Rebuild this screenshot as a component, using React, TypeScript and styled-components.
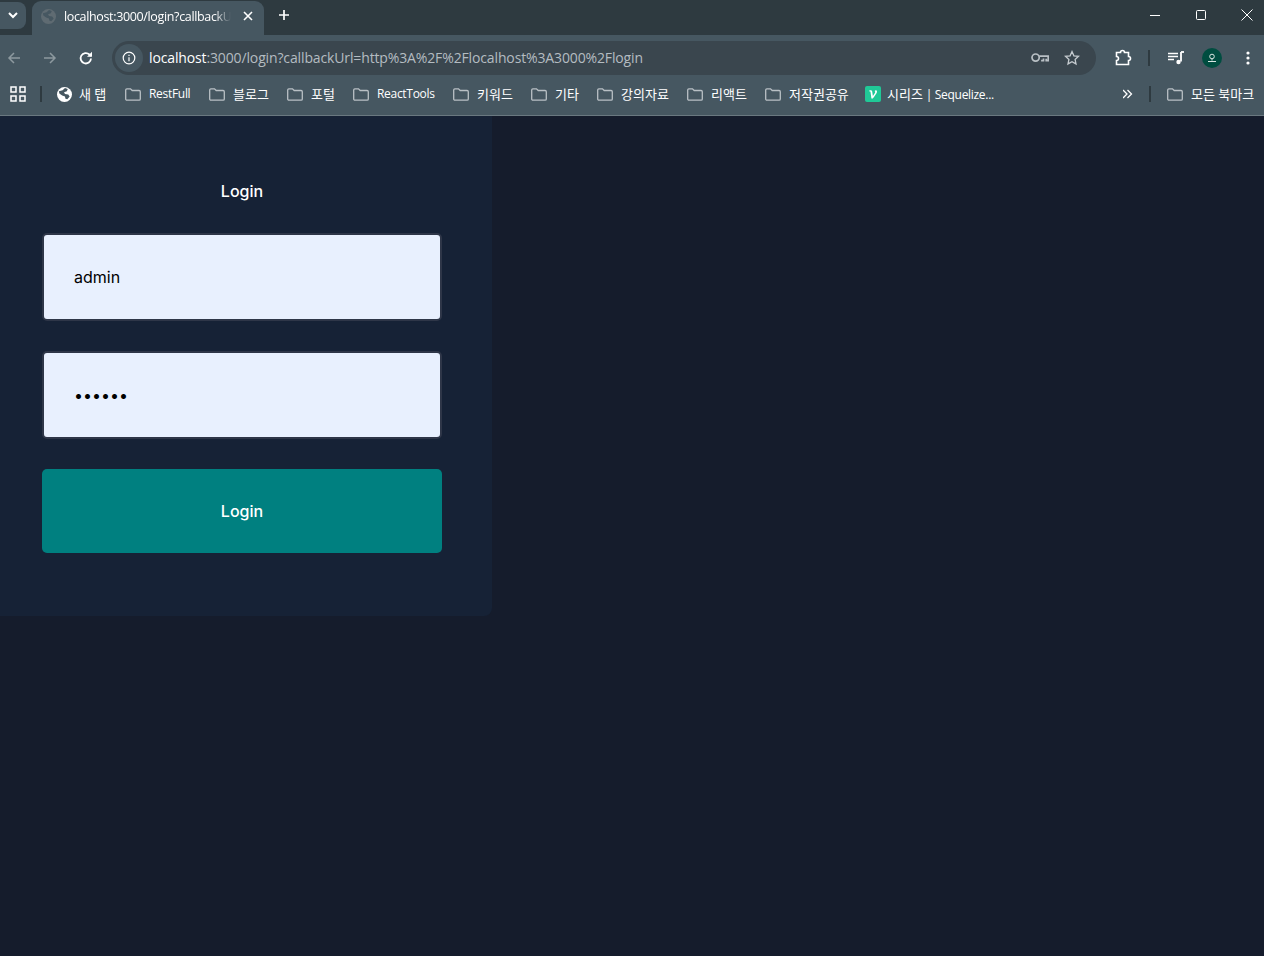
import styled, { createGlobalStyle } from 'styled-components'

const UI_FONT = `"Open Sans", "Noto Sans", "Noto Sans CJK KR", sans-serif`

// step = distance from this bookmark's icon to the next one
const bookmarks = [
  { label: 'RestFull', step: 84 },
  { label: '블로그', step: 78, ko: true },
  { label: '포털', step: 66, ko: true },
  { label: 'ReactTools', step: 100 },
  { label: '키워드', step: 78, ko: true },
  { label: '기타', step: 66, ko: true },
  { label: '강의자료', step: 90, ko: true },
  { label: '리액트', step: 78, ko: true },
  { label: '저작권공유', step: 100, ko: true },
]

const GlobalStyle = createGlobalStyle`
  html, body {
    margin: 0;
    padding: 0;
    height: 100%;
    background: #151c2c;
  }
  #root {
    height: 100%;
  }
  * {
    box-sizing: border-box;
  }
  svg {
    display: block;
    flex: none;
  }
`

const Root = styled.div`
  width: 1264px;
  height: 956px;
  display: flex;
  flex-direction: column;
  overflow: hidden;
  background: #151c2c;
`

const Chrome = styled.header`
  flex: none;
  font-family: ${UI_FONT};
  color: #fff;
`

const TabStrip = styled.div`
  height: 35px;
  display: flex;
  align-items: flex-end;
  background: #2e3a40;
  position: relative;
`

const TabSearch = styled.button`
  position: absolute;
  left: 0;
  top: 2px;
  width: 26px;
  height: 27px;
  padding: 0;
  border: 0;
  border-radius: 0 8px 8px 0;
  background: #465761;
  display: flex;
  align-items: center;
  justify-content: center;
`

const Tab = styled.div`
  width: 232px;
  height: 34px;
  margin-left: 32px;
  padding: 0 10px 3px 9px;
  display: flex;
  align-items: center;
  border-radius: 9px 9px 0 0;
  background: #465761;
`

const TabTitle = styled.span`
  width: 167px;
  margin-left: 8px;
  overflow: hidden;
  white-space: nowrap;
  font-size: 12.5px;
  letter-spacing: -0.35px;
  mask-image: linear-gradient(to right, #000 90%, transparent);
`

const TabClose = styled.span`
  margin: 0 1px 2px auto;
  display: flex;
`

const NewTab = styled.span`
  margin: 0 0 5px 14px;
  height: 30px;
  display: flex;
  align-items: center;
`

const WindowControls = styled.div`
  position: absolute;
  right: 10px;
  top: 8px;
  display: flex;
  gap: 32px;
`

const Toolbar = styled.div`
  height: 41px;
  padding: 5px 10px 0 6px;
  display: flex;
  align-items: center;
  background: #465761;
`

const NavIcons = styled.div`
  display: flex;
  align-items: center;
  gap: 20px;
  width: 106px;
`

const NavButton = styled.span<{ $disabled?: boolean }>`
  color: ${(p) => (p.$disabled ? '#8d999f' : '#fff')};
`

const Omnibox = styled.div`
  width: 984px;
  height: 34px;
  padding: 0 16px 0 3px;
  display: flex;
  align-items: center;
  border-radius: 17px;
  background: #3a464e;
`

const SiteInfo = styled.span`
  width: 28px;
  height: 28px;
  display: flex;
  align-items: center;
  justify-content: center;
  border-radius: 50%;
  background: #465761;
`

const Url = styled.span`
  margin: 0 0 2px 6px;
  flex: 1;
  font-size: 14px;
  letter-spacing: -0.135px;
  white-space: nowrap;
  color: #b4bcc1;

  b {
    font-weight: 400;
    color: #fff;
  }
`

const OmniActions = styled.div`
  display: flex;
  align-items: center;
  gap: 15px;
`

const ToolActions = styled.div`
  margin-left: 18px;
  display: flex;
  align-items: center;
`

const Slot = styled.span<{ $left?: number; $right?: number }>`
  display: block;
  margin-left: ${(p) => p.$left ?? 0}px;
  margin-right: ${(p) => p.$right ?? 0}px;
`

const Divider = styled.span`
  display: block;
  width: 2px;
  height: 16px;
  background: #2e3a40;
`

const Avatar = styled.span`
  width: 20px;
  height: 20px;
  display: flex;
  align-items: center;
  justify-content: center;
  border-radius: 50%;
  background: #004d40;
`

const BookmarkBar = styled.div`
  height: 40px;
  padding: 0 9px 3px 10px;
  display: flex;
  align-items: center;
  background: #465761;
  border-bottom: 1px solid #6a7880;
`

const AppsButton = styled.span`
  display: flex;
  margin-right: 14px;
`

const Bookmark = styled.span<{ $width: number; $gap?: number }>`
  width: ${(p) => p.$width}px;
  flex: none;
  display: flex;
  align-items: center;
  gap: ${(p) => p.$gap ?? 8}px;
  white-space: nowrap;
  color: #fff;
`

const Label = styled.span<{ $ko?: boolean }>`
  display: inline-block;
  font-size: ${(p) => (p.$ko ? 13 : 12)}px;
  letter-spacing: ${(p) => (p.$ko ? 0 : -0.3)}px;
  white-space: pre;
  transform: translateY(-1px);
`

const BookmarkList = styled.div`
  margin-left: 15px;
  display: flex;
  align-items: center;
`

const Overflow = styled.div`
  margin-left: auto;
  display: flex;
  align-items: center;
  gap: 16px;
`

const Main = styled.main`
  flex: 1;
  min-height: 0;
`

const LoginCard = styled.form`
  width: 492px;
  height: 500px;
  padding: 63px 50px 0 42px;
  display: flex;
  flex-direction: column;
  border-radius: 0 0 8px 0;
  background: #162236;
  font-family: Inter, "Liberation Sans", sans-serif;
`

const Title = styled.h1`
  margin: 0 0 30px;
  font-size: 16px;
  font-weight: 500;
  line-height: 24px;
  text-align: center;
  color: #fff;
`

const Field = styled.input`
  width: 400px;
  height: 87.5px;
  margin-bottom: 30.5px;
  padding: 0 30px;
  border: 2px solid #2e3648;
  border-radius: 5px;
  outline: 0;
  font-family: inherit;
  font-size: 16px;
  color: #000;
  background: #e8f0fe;
`

const Submit = styled.button`
  width: 400px;
  height: 84px;
  padding: 0;
  border: 0;
  border-radius: 5px;
  font-family: inherit;
  font-size: 16px;
  font-weight: 500;
  color: #fff;
  background: #008080;
`

const Folder = () => (
  <svg width="16" height="13" viewBox="0 0 16 13" fill="none" stroke="#b9c0c5" strokeWidth="1.3">
    <path d="M.7 2A1.2 1.2 0 0 1 1.9.8h3.6l1.7 1.7h6.9a1.2 1.2 0 0 1 1.2 1.2v7.3a1.2 1.2 0 0 1-1.2 1.2H1.9a1.2 1.2 0 0 1-1.2-1.2z" />
  </svg>
)

const Globe = ({ color = '#fff' }: { color?: string }) => (
  <svg width="15" height="15" viewBox="0 0 16 16">
    <circle cx="8" cy="8" r="8" fill={color} />
    <path
      d="M2 4.5 6 3.5 8.5 1l3 1-1 2.5-3 1 1 2 3.5.5 1.5 2-2.5 3-2-.5-.5-2.5L5.5 9 2.5 7z"
      fill="#465761"
    />
  </svg>
)

export default function App() {
  return (
    <Root>
      <GlobalStyle />
      <Chrome>
        <TabStrip>
          <TabSearch>
            <svg width="10" height="7" viewBox="0 0 10 7" fill="none" stroke="#fff" strokeWidth="2">
              <path d="m1 1 4 4 4-4" />
            </svg>
          </TabSearch>
          <Tab>
            <Globe color="#5f6b72" />
            <TabTitle>localhost:3000/login?callbackU</TabTitle>
            <TabClose>
              <svg width="10" height="10" viewBox="0 0 10 10" stroke="#fff" strokeWidth="1.6">
                <path d="m1 1 8 8M9 1 1 9" />
              </svg>
            </TabClose>
          </Tab>
          <NewTab>
            <svg width="12" height="12" viewBox="0 0 12 12" stroke="#fff" strokeWidth="1.7">
              <path d="M6 1v10M1 6h10" />
            </svg>
          </NewTab>
          <WindowControls>
            <svg width="14" height="14" viewBox="0 0 14 14" stroke="#fff">
              <path d="M2 7.500h10" />
            </svg>
            <svg width="14" height="14" viewBox="0 0 14 14" stroke="#fff" fill="none">
              <rect x="2.5" y="2.5" width="9" height="9" rx="1" />
            </svg>
            <svg width="14" height="14" viewBox="0 0 14 14" stroke="#fff">
              <path d="m1.500 1.500 11 11M12.500 1.500l-11 11" />
            </svg>
          </WindowControls>
        </TabStrip>

        <Toolbar>
          <NavIcons>
            <NavButton $disabled>
              <svg width="16" height="16" viewBox="0 0 16 16" fill="none" stroke="currentColor" strokeWidth="1.5">
                <path d="M14 8H3M8 3 3 8l5 5" />
              </svg>
            </NavButton>
            <NavButton $disabled>
              <svg width="16" height="16" viewBox="0 0 16 16" fill="none" stroke="currentColor" strokeWidth="1.5">
                <path d="M2 8h11M8 3l5 5-5 5" />
              </svg>
            </NavButton>
            <NavButton>
              <svg width="16" height="16" viewBox="0 0 16 16" fill="none" stroke="currentColor" strokeWidth="1.8">
                <path d="M13 8.500a5.200 5.200 0 1 1-1.600-4L13 6" />
                <path d="M14 1.800v5H9" fill="currentColor" stroke="none" />
              </svg>
            </NavButton>
          </NavIcons>
          <Omnibox>
            <SiteInfo>
              <svg width="14" height="14" viewBox="0 0 14 14" fill="none" stroke="#fff" strokeWidth="1.2">
                <circle cx="7" cy="7" r="5.8" />
                <path d="M7 6.200v4M7 3.800v1.200" />
              </svg>
            </SiteInfo>
            <Url>
              <b>localhost</b>:3000/login?callbackUrl=http%3A%2F%2Flocalhost%3A3000%2Flogin
            </Url>
            <OmniActions>
              <svg width="18" height="12" viewBox="0 0 18 12" fill="none" stroke="#b9c0c5" strokeWidth="1.7">
                <circle cx="4.600" cy="5.600" r="3.600" />
                <path d="M8.200 4.200h9v4.400h-2V6.800M12.500 6.500v2.100h-2.400" />
              </svg>
              <svg width="16" height="16" viewBox="0 0 16 16" fill="none" stroke="#c5cbcf" strokeWidth="1.3">
                <path d="m8 1.600 1.900 4.200 4.600.5-3.400 3.100.9 4.500L8 11.700l-4 2.200.9-4.500-3.400-3.100 4.600-.5z" />
              </svg>
            </OmniActions>
          </Omnibox>
          <ToolActions>
            <svg width="18" height="18" viewBox="0 0 18 18" fill="none" stroke="#fff" strokeWidth="1.6">
              <path d="M2.500 3.500h4a2 2 0 0 1 4 0h4v4a2 2 0 0 1 0 4v4h-12v-4a2 2 0 0 0 0-4z" />
            </svg>
            <Slot $left={16} $right={18}>
              <Divider />
            </Slot>
            <svg width="16" height="14" viewBox="0 0 16 14" fill="#fff" stroke="#fff">
              <path d="M0 2.500h10M0 5.500h10M0 8.500h6" fill="none" strokeWidth="1.3" />
              <path d="M13 1v9.500" strokeWidth="1.8" fill="none" />
              <path d="M13 1h3" strokeWidth="1.8" fill="none" />
              <circle cx="10.500" cy="11" r="2.200" stroke="none" />
            </svg>
            <Slot $left={18}>
              <Avatar>
                <svg width="10" height="10" viewBox="0 0 10 10" fill="none" stroke="#d9e6e2" strokeWidth="1">
                  <circle cx="5" cy="3.500" r="2.300" />
                  <path d="M5 6v1.500M1 8.500h8" />
                </svg>
              </Avatar>
            </Slot>
            <Slot $left={24}>
              <svg width="4" height="14" viewBox="0 0 4 14" fill="#fff">
                <circle cx="2" cy="2" r="1.6" />
                <circle cx="2" cy="7" r="1.6" />
                <circle cx="2" cy="12" r="1.6" />
              </svg>
            </Slot>
          </ToolActions>
        </Toolbar>

        <BookmarkBar>
          <AppsButton>
            <svg width="16" height="16" viewBox="0 0 16 16" fill="none" stroke="#fff" strokeWidth="1.5">
              <rect x="1" y="1" width="5" height="5" />
              <rect x="10" y="1" width="5" height="5" />
              <rect x="1" y="10" width="5" height="5" />
              <rect x="10" y="10" width="5" height="5" />
            </svg>
          </AppsButton>
          <Divider />
          <BookmarkList>
            <Bookmark $width={68} $gap={7}>
              <Globe />
              <Label $ko>새 탭</Label>
            </Bookmark>
            {bookmarks.map((b) => (
              <Bookmark key={b.label} $width={b.step}>
                <Folder />
                <Label $ko={b.ko}>{b.label}</Label>
              </Bookmark>
            ))}
            <Bookmark $width={130} $gap={6}>
              <svg width="16" height="16" viewBox="0 0 16 16">
                <rect width="16" height="16" rx="2" fill="#20c997" />
                <path d="M4.200 4.500c1.500-.6 2.600-.5 2.900.6l.8 5 2-3.200c.6-1 .3-1.500-.3-2 1-1 2.600-.6 2.400 1-.2 1.200-2.400 4.200-4.200 6.600H6.400L5.500 6c-.1-.5-.5-.6-1.100-.5z" fill="#fff" />
              </svg>
              <span>
                <Label $ko>시리즈</Label>
                <Label> | Sequelize...</Label>
              </span>
            </Bookmark>
          </BookmarkList>
          <Overflow>
            <svg width="10" height="10" viewBox="0 0 10 10" fill="none" stroke="#fff" strokeWidth="1.3">
              <path d="m0 1 4 4-4 4M4.500 1l4 4-4 4" />
            </svg>
            <Divider />
            <Bookmark $width={88}>
              <Folder />
              <Label $ko>모든 북마크</Label>
            </Bookmark>
          </Overflow>
        </BookmarkBar>
      </Chrome>

      <Main>
        <LoginCard onSubmit={(e) => e.preventDefault()}>
          <Title>Login</Title>
          <Field type="text" defaultValue="admin" />
          <Field type="password" defaultValue="secret" />
          <Submit type="submit">Login</Submit>
        </LoginCard>
      </Main>
    </Root>
  )
}
